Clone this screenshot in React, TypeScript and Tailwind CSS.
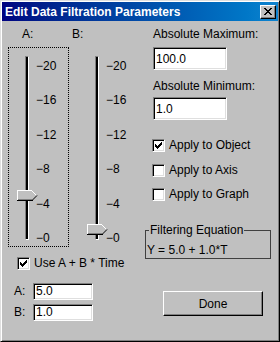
import type { CSSProperties } from 'react'

const TICKS = ['−20', '−16', '−12', '−8', '−4', '−0']

function CheckMark() {
  return (
    <svg width="9" height="9" viewBox="0 0 9 9" shapeRendering="crispEdges" className="m-[1px] block">
      <path
        d="M1 3h1v3h-1z M2 4h1v3h-1z M3 5h1v3h-1z M4 4h1v3h-1z M5 3h1v3h-1z M6 2h1v3h-1z M7 1h1v3h-1z"
        fill="#000"
      />
    </svg>
  )
}

function CheckBox({ checked, label }: { checked?: boolean; label: string }) {
  return (
    <div className="flex items-center h-[13px] gap-[4px]">
      <div className="w-[13px] h-[13px] shrink-0 bg-white border border-t-[#808080] border-l-[#808080] border-b-white border-r-white shadow-[inset_1px_1px_0_#000,inset_-1px_-1px_0_#dfdfdf]">
        {checked && <CheckMark />}
      </div>
      <span className="leading-[13px] whitespace-nowrap">{label}</span>
    </div>
  )
}

function TextBox({ value, className }: { value: string; className: string }) {
  return (
    <div
      className={
        'flex items-center pl-[2px] bg-white border border-t-[#808080] border-l-[#808080] border-b-white border-r-white shadow-[inset_1px_1px_0_#000,inset_-1px_-1px_0_#dfdfdf] ' +
        className
      }
    >
      {value}
    </div>
  )
}

function Thumb({ style }: { style: CSSProperties }) {
  return (
    <svg width="21" height="12" viewBox="0 0 21 12" shapeRendering="crispEdges" className="absolute left-0" style={style}>
      <polygon points="0,0 15,0 20,5 15,10 0,10" fill="#c0c0c0" />
      <path d="M0.5 10V0.5H15" stroke="#fff" fill="none" />
      <path d="M15 1L19 5" stroke="#fff" fill="none" shapeRendering="auto" />
      <path d="M0 10.5H15.5" stroke="#000" fill="none" />
      <path d="M1 9.5H15" stroke="#808080" fill="none" />
      <path d="M20 5.5L15.5 10" stroke="#000" fill="none" shapeRendering="auto" />
    </svg>
  )
}

function Slider({ value }: { value: number }) {
  // track runs 183px, tick centres 10px..182px from the top
  const top = 182 - value * 8.6 - 5.5
  return (
    <div className="flex">
      <div className="relative w-[19px] h-[189px]">
        <div className="ml-[8px] w-[4px] h-[184px] bg-black border-t border-l border-t-[#808080] border-l-[#808080] border-r border-b border-r-white border-b-white" />
        <Thumb style={{ top }} />
      </div>
      <div className="flex flex-col justify-between h-[186px] mt-[3px] leading-[14px]">
        {TICKS.map((t) => (
          <span key={t}>{t}</span>
        ))}
      </div>
    </div>
  )
}

export default function App() {
  return (
    <div className="w-[280px] h-[342px] bg-[#c0c0c0] border border-t-[#dfdfdf] border-l-[#dfdfdf] border-b-black border-r-black shadow-[inset_1px_1px_0_#fff,inset_-1px_-1px_0_#808080] p-[1px] text-[12px] text-black font-['Liberation_Sans',Arial,sans-serif] overflow-hidden">
      <div className="h-[19px] flex items-center justify-between bg-linear-to-r from-[#000080] to-[#1084d0] pl-[3px] pr-[2px]">
        <span className="text-white font-bold leading-[14px] whitespace-nowrap">Edit Data Filtration Parameters</span>
        <button className="w-[16px] h-[14px] flex items-center justify-center bg-[#c0c0c0] border border-t-white border-l-white border-b-black border-r-black shadow-[inset_-1px_-1px_0_#808080]">
          <svg width="8" height="7" viewBox="0 0 8 7" shapeRendering="crispEdges" className="mt-[-1px]">
            <path
              d="M0 0h2v1h-2z M6 0h2v1h-2z M1 1h2v1h-2z M5 1h2v1h-2z M2 2h4v1h-4z M3 3h2v1h-2z M2 4h4v1h-4z M1 5h2v1h-2z M5 5h2v1h-2z M0 6h2v1h-2z M6 6h2v1h-2z"
              fill="#000"
            />
          </svg>
        </button>
      </div>

      <div className="flex pl-[6px]">
        {/* left: sliders */}
        <div className="w-[137px] flex flex-col">
          <div className="flex mt-[6px] pl-[14px] leading-[14px]">
            <span className="w-[50px]">A:</span>
            <span>B:</span>
          </div>
          <div className="flex mt-[6px]">
            <div className="w-[61px] h-[200px] border border-dotted border-black pl-[8px] pt-[8px]">
              <Slider value={5} />
            </div>
            <div className="ml-[18px] mt-[9px]">
              <Slider value={1} />
            </div>
          </div>
          <div className="mt-[10px] pl-[9px]">
            <CheckBox checked label="Use A + B * Time" />
          </div>
          <div className="flex items-center mt-[12px] pl-[6px]">
            <span className="w-[19px]">A:</span>
            <TextBox value="5.0" className="w-[60px] h-[17px]" />
          </div>
          <div className="flex items-center mt-[3px] pl-[6px]">
            <span className="w-[19px]">B:</span>
            <TextBox value="1.0" className="w-[60px] h-[17px]" />
          </div>
        </div>

        {/* right: limits and options */}
        <div className="flex flex-col">
          <span className="mt-[6px] ml-[8px] leading-[14px]">Absolute Maximum:</span>
          <TextBox value="100.0" className="mt-[6px] ml-[8px] w-[74px] h-[23px]" />
          <span className="mt-[9px] ml-[8px] leading-[14px]">Absolute Minimum:</span>
          <TextBox value="1.0" className="mt-[4px] ml-[8px] w-[74px] h-[23px]" />
          <div className="flex flex-col ml-[7px] mt-[19px]">
            <CheckBox checked label="Apply to Object" />
            <div className="mt-[12px]">
              <CheckBox label="Apply to Axis" />
            </div>
            <div className="mt-[11px]">
              <CheckBox label="Apply to Graph" />
            </div>
          </div>
          <fieldset className="mt-[22px] w-[126px] border border-[#404040] pb-[1px]">
            <legend className="ml-[3px] px-[1px] leading-[14px]">Filtering Equation</legend>
            <div className="pl-[1px] pt-[6px] leading-[14px]">Y = 5.0 + 1.0*T</div>
          </fieldset>
          <button className="mt-[32px] ml-[18px] w-[100px] h-[25px] bg-[#c0c0c0] border border-t-white border-l-white border-b-black border-r-black shadow-[inset_-1px_-1px_0_#808080]">
            Done
          </button>
        </div>
      </div>
    </div>
  )
}
